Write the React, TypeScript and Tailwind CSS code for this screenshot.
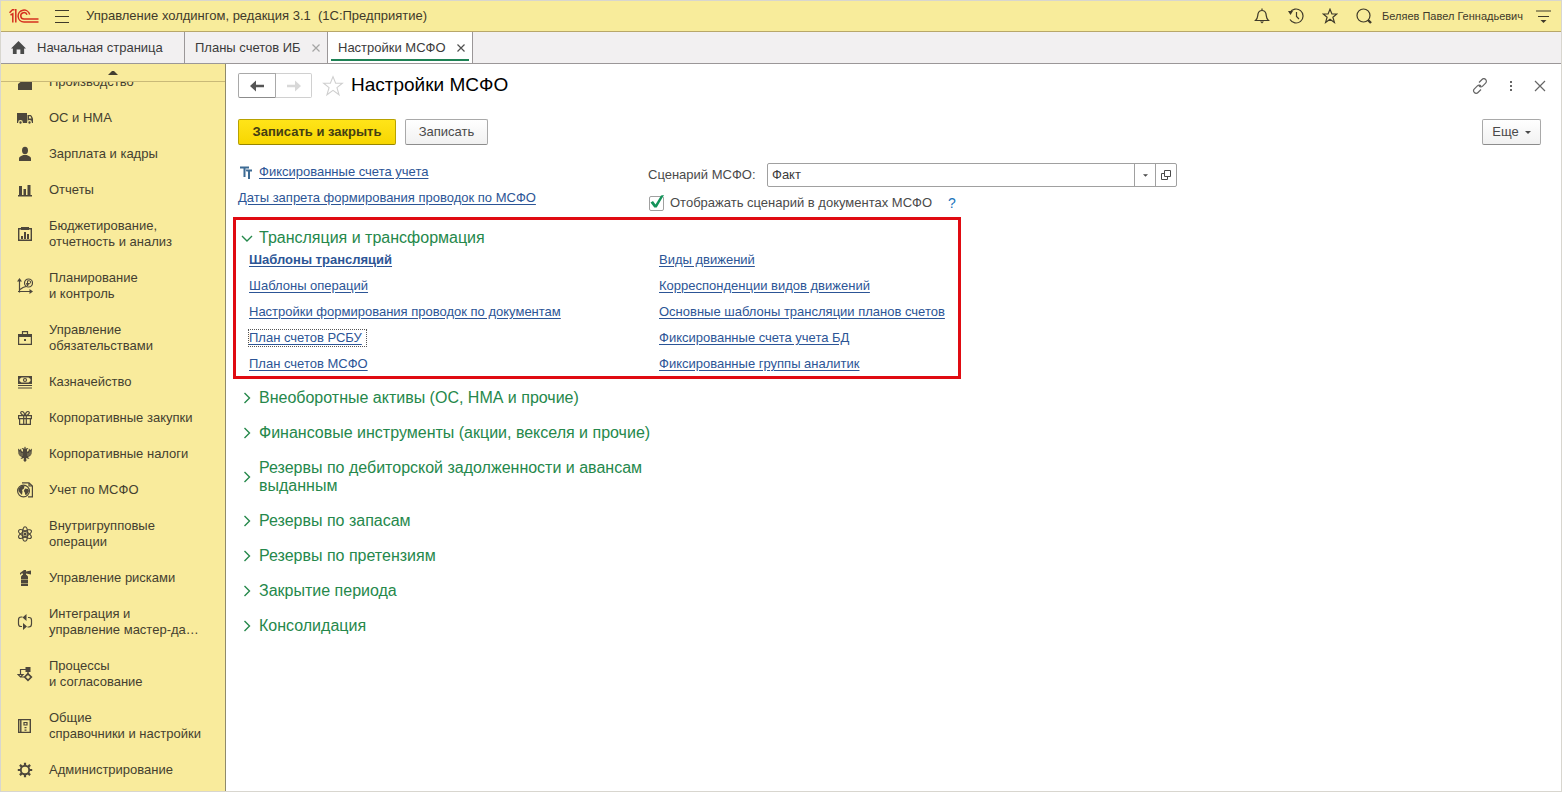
import type { ReactNode } from 'react';

type IconProps = { children: ReactNode; className?: string; box?: string };

function Icon({ children, className = 'size-4', box = '0 0 16 16' }: IconProps) {
  return (
    <svg viewBox={box} className={`shrink-0 ${className}`} fill="none" stroke="currentColor" strokeWidth="1.2" aria-hidden="true">
      {children}
    </svg>
  );
}

const solid = { fill: 'currentColor', stroke: 'none' };

const icons = {
  factory: <path {...solid} d="M1 16V10l5-4 8-2h1v12z" />,
  truck: (
    <>
      <path {...solid} d="M0 3h10v10H0z" />
      <path {...solid} d="M10.500 5H13c1 0 1.500.500 2 1.500l1 2V13h-5.500z" />
      <path d="M12 6.200h1.500l1 2.300H12z" fill="#f9eb9c" stroke="none" />
      <circle cx="3.500" cy="12.500" r="1.800" fill="currentColor" stroke="#f9eb9c" />
      <circle cx="12.500" cy="12.500" r="1.800" fill="currentColor" stroke="#f9eb9c" />
    </>
  ),
  person: (
    <>
      <ellipse {...solid} cx="8" cy="4.500" rx="3" ry="3.700" />
      <path {...solid} d="M2 15v-2.500C2 10.500 4 10 6.300 9h3.400C12 10 14 10.500 14 12.500V15z" />
    </>
  ),
  bars: <path {...solid} d="M1 13h14v1.500H1zM2 4h3v9H2zM6.500 7h2.500v6H6.500zM10.500 3h3v10h-3z" />,
  budget: (
    <>
      <path d="M1.700 2.700h12.600v11.600H1.700z" strokeWidth="1.400" />
      <path {...solid} d="M4 1h8v3H4zM4 10h2v3H4zM7 6h2v7H7zM10 8h2v5h-2z" />
    </>
  ),
  planning: (
    <>
      <path d="M2.500 2v12.500M1 13.500h13M3 11.500l3-2 3-1" />
      <path {...solid} d="M2.500 0 5 3.500H0zM16 13.500 12.500 11v5z" />
      <circle cx="11.500" cy="5" r="4" />
      <path d="M10.500 8V2.800h1.800a1.300 1.300 0 0 1 0 2.700H9.200M9.200 6.800h3" strokeWidth="1" />
    </>
  ),
  briefcase: (
    <>
      <path d="M1.600 5.500h12.800v8.900H1.600zM5.500 4V1.700h5V4" />
      <path {...solid} d="M1 4h14v3H1zM7 9h2v2H7z" />
    </>
  ),
  money: (
    <>
      <path {...solid} fillRule="evenodd" d="M1 2h14v8H1zM4.500 3.500 2.500 5v2l2 1.500h7l2-1.500V5l-2-1.500z" />
      <circle cx="8" cy="6" r="1.500" />
      <path d="M1 11.500h14M1 14h14" />
    </>
  ),
  gift: (
    <>
      <path d="M1.600 5.600h12.800v3H1.600zM2.600 8.600v5.800h10.800V8.600M6.700 5.600v8.800M9.300 5.600v8.800" />
      <path d="M7.500 5.500C3 5 3 1.500 5 1.500c1.500 0 2.500 2 3 4 .5-2 1.500-4 3-4 2 0 2 3.500-2.500 4" />
    </>
  ),
  eagle: (
    <>
      <path {...solid} d="M6 2l-1.500.5L6 3.500v2.200L4.500 5 4 2.500 2.800 4 1 2.500l.3 3 .2 2.500 1.300 2L5 11l-1.500 2 2-.5L7 12l-.5 2.500L8 16l1.500-1.500L9 12l1.500.5 2 .5L11 11l2.200-1 1.300-2 .2-2.500.3-3L13.200 4 12 2.500 11.500 5 10 5.700V3.500l1.500-1L10 2 8.700 3V1.500L8 .5l-.7 1V3z" />
      <path d="M3 5.500v4M5 7v3M11 7v3M13 5.500v4" stroke="#f9eb9c" strokeWidth=".4" />
    </>
  ),
  globe: (
    <>
      <path d="M5 .800h7L15.400 4v10.800H11M12 .800V4h3.400" />
      <circle cx="6.500" cy="9" r="5.900" />
      <path {...solid} d="M1.500 7c2-3.500 4-3.500 6-3l-.5 2.500-2 1.500.5 1.500L5 13l-2-2-1.500-2zM8 6.500l3 .5 1 2-2 3.500-1.700.500-.5-2.500-1-1.500z" />
    </>
  ),
  atom: (
    <>
      <ellipse cx="8" cy="8" rx="2.700" ry="7.200" strokeWidth="1.100" />
      <ellipse cx="8" cy="8" rx="2.700" ry="7.200" strokeWidth="1.100" transform="rotate(60 8 8)" />
      <ellipse cx="8" cy="8" rx="2.700" ry="7.200" strokeWidth="1.100" transform="rotate(120 8 8)" />
      <circle {...solid} cx="8" cy="8" r="1.600" />
    </>
  ),
  extinguisher: (
    <path {...solid} d="M4 7c0-1 1-2 2-2.300V3.500H4.500L3 5V3l2-1.500L7 0h2v1.500l5-1v4l-5-1v1.200C10 5 11 6 11 7v2H4zM4 9.500h7V13H4zM4 13.500h7V16H4z" />
  ),
  sync: (
    <>
      <path d="M5.500 3H4.200C2 3 1.500 4.500 1.500 6v4c0 1.500.5 2.500 2.500 2.500h1M11 3.500h1c2 0 2.500 1 2.500 2.500v4c0 2-1 3-2.700 3H10.500" />
      <path {...solid} d="M5.500 3.500 9.500 0v7zM10 12.500 6 9v7z" />
    </>
  ),
  process: (
    <>
      <path {...solid} d="M8.500 1h5v5h-5z" />
      <path d="M9 3.500H3.500V8M1 8.500h5L3.500 11zM11 6v2M3.500 11H7" />
      <path d="M11 7.800 14.300 11 11 14.300 7.700 11z" strokeWidth="1.700" />
    </>
  ),
  book: (
    <>
      <path d="M1.700 1.600h11.600v12.800H1.700zM3.800 2v12" strokeWidth="1.400" />
      <path d="M7 4.500h3v2.500H7z" />
      <path {...solid} d="M7.500 9h2v1.300h-2zM7.500 11.500h2v1.300h-2z" />
    </>
  ),
  gear: (
    <>
      <circle cx="8" cy="8" r="4.200" strokeWidth="1.900" />
      <path strokeWidth="2.200" d="M8 .800v2.700M8 12.500v2.700M.800 8h2.700M12.500 8h2.700M2.900 2.900l2 2M11.100 11.100l2 2M13.100 2.900l-2 2M4.900 11.100l-2 2" />
    </>
  ),
};

const menu: { icon: keyof typeof icons; lines: string[] }[] = [
  { icon: 'factory', lines: ['Производство'] },
  { icon: 'truck', lines: ['ОС и НМА'] },
  { icon: 'person', lines: ['Зарплата и кадры'] },
  { icon: 'bars', lines: ['Отчеты'] },
  { icon: 'budget', lines: ['Бюджетирование,', 'отчетность и анализ'] },
  { icon: 'planning', lines: ['Планирование', 'и контроль'] },
  { icon: 'briefcase', lines: ['Управление', 'обязательствами'] },
  { icon: 'money', lines: ['Казначейство'] },
  { icon: 'gift', lines: ['Корпоративные закупки'] },
  { icon: 'eagle', lines: ['Корпоративные налоги'] },
  { icon: 'globe', lines: ['Учет по МСФО'] },
  { icon: 'atom', lines: ['Внутригрупповые', 'операции'] },
  { icon: 'extinguisher', lines: ['Управление рисками'] },
  { icon: 'sync', lines: ['Интеграция и', 'управление мастер-да…'] },
  { icon: 'process', lines: ['Процессы', 'и согласование'] },
  { icon: 'book', lines: ['Общие', 'справочники и настройки'] },
  { icon: 'gear', lines: ['Администрирование'] },
];

const leftLinks = [
  'Шаблоны трансляций',
  'Шаблоны операций',
  'Настройки формирования проводок по документам',
  'План счетов РСБУ',
  'План счетов МСФО',
];

const rightLinks = [
  'Виды движений',
  'Корреспонденции видов движений',
  'Основные шаблоны трансляции планов счетов',
  'Фиксированные счета учета БД',
  'Фиксированные группы аналитик',
];

const groups = [
  'Внеоборотные активы (ОС, НМА и прочие)',
  'Финансовые инструменты (акции, векселя и прочие)',
  'Резервы по дебиторской задолженности и авансам выданным',
  'Резервы по запасам',
  'Резервы по претензиям',
  'Закрытие периода',
  'Консолидация',
];

const starPath = 'M10 1.500l2.400 6h6.100l-4.900 4 1.900 6.500-5.500-4-5.500 4 1.900-6.500-4.900-4h6.100z';

function Header() {
  return (
    <header className="flex h-[31px] items-center border-b border-[#b8a76a] bg-[#f8ec9b] pr-2.5 pl-2 text-[#3f3a2a]">
      <svg viewBox="0 0 30 16" className="h-4 w-[30px]" fill="none" stroke="#d5301f" strokeWidth="1.500" role="img" aria-label="1С">
        <path d="M.500 4.800 3.500 1.700H5M3.800 14.500V5.800L1.500 7M6.800 14.500V1.700H5.500" />
        <path d="M20.700 6.500A5.900 5.900 0 1 0 15 13.900h14.500" />
        <path d="M18 6.800A3.200 3.200 0 1 0 15 11h14.500" />
      </svg>
      <button type="button" aria-label="Главное меню" className="ml-[15px]">
        <Icon className="size-4"><path d="M1 2.500h14M1 8.500h14M1 14.500h14" /></Icon>
      </button>
      <span className="ml-4 whitespace-pre">Управление холдингом, редакция 3.1  (1С:Предприятие)</span>
      <div className="ml-auto flex items-center gap-[18px]">
        <button type="button" aria-label="Уведомления">
          <Icon><path d="M1.500 12.500C4 10.500 3.500 8 4 6c.4-2 1.500-3.500 4-3.500S11.600 4 12 6c.5 2 0 4.500 2.500 6.500zM8 2.500V.5" /><path {...solid} d="M6 13.500h4L8 15.500z" /></Icon>
        </button>
        <button type="button" aria-label="История">
          <Icon><path d="M2 4.500A7 7 0 1 1 2 11.500M8.500 4v4.500l2.500 2.500" /><path {...solid} d="M0 3l5 0-2.500 4z" /></Icon>
        </button>
        <button type="button" aria-label="Избранное">
          <Icon box="0 0 20 20"><path d={starPath} strokeWidth="1.500" /></Icon>
        </button>
        <button type="button" aria-label="Поиск">
          <Icon><circle cx="7.500" cy="7.500" r="6.500" /><path d="m12 12 3 3" strokeWidth="2.400" /></Icon>
        </button>
      </div>
      <span className="ml-2.5 text-[11px]">Беляев Павел Геннадьевич</span>
      <button type="button" aria-label="Настройки окна" className="ml-3">
        <Icon><path d="M1 3h15M3 8.500h11" /><path {...solid} d="M5.500 12h6l-3 3z" /></Icon>
      </button>
    </header>
  );
}

function Tabs() {
  return (
    <nav className="flex h-8 border-b border-[#9b9798] bg-[#f2f0f1] text-[#3b3b3b]">
      <button type="button" className="flex w-[184px] items-center gap-[11px] border-r border-[#9b9798] pl-2.5">
        <Icon className="size-[15px] text-[#4a4a4a]"><path {...solid} d="M8 1 16 9h-2v6h-4v-5H6v5H2V9H0z" /></Icon>
        Начальная страница
      </button>
      <div className="flex w-[143px] items-center justify-between border-r border-[#9b9798] pr-[7px] pl-2.5">
        <button type="button">Планы счетов ИБ</button>
        <button type="button" aria-label="Закрыть вкладку Планы счетов ИБ" className="text-[#a5a5a5]">
          <Icon className="size-2" box="0 0 8 8"><path d="m.5.500 7 7m0-7-7 7" /></Icon>
        </button>
      </div>
      <div className="flex w-[145px] border-r border-[#9b9798] bg-white px-[3px] pt-1 pb-0.5">
        <div className="flex grow items-center justify-between border-b-2 border-[#1f8255] pr-1 pl-[7px]">
          <button type="button">Настройки МСФО</button>
          <button type="button" aria-label="Закрыть вкладку Настройки МСФО" className="text-[#505050]">
            <Icon className="size-2" box="0 0 8 8"><path d="m.5.500 7 7m0-7-7 7" /></Icon>
          </button>
        </div>
      </div>
    </nav>
  );
}

function Sidebar() {
  return (
    <aside className="flex w-[225px] shrink-0 flex-col border-r border-[#8f8a6c] bg-[#f9eb9c] text-[#443f30]">
      <button type="button" aria-label="Прокрутить вверх" className="flex h-[18px] shrink-0 items-center justify-center border-b border-[#c9b978]">
        <Icon className="h-1 w-2.5" box="0 0 10 4"><path {...solid} d="M0 4 4 0h2l4 4z" /></Icon>
      </button>
      <div className="overflow-hidden">
        <ul className="-mt-[18px]">
          {menu.map((item) => (
            <li key={item.icon}>
              <a href="#" className="flex items-center gap-4 py-2.5 pl-4 leading-4">
                <Icon className="size-4 text-[#4d473b]">{icons[item.icon]}</Icon>
                <span>
                  {item.lines.map((line) => (
                    <span key={line} className="block whitespace-nowrap">{line}</span>
                  ))}
                </span>
              </a>
            </li>
          ))}
        </ul>
      </div>
    </aside>
  );
}

const linkClass = 'text-[#2c5596] underline underline-offset-2';
const buttonClass = 'flex h-[26px] items-center justify-center rounded-xs border border-[#a9a9a9] border-b-[#8c8c8c] bg-linear-to-b from-white to-[#f1f1f1] text-[#4a4a4a]';

function LinkColumn({ items }: { items: string[] }) {
  return (
    <ul className="flex flex-col gap-2.5 leading-4">
      {items.map((text) => (
        <li key={text} className="flex">
          <a
            href="#"
            className={`${linkClass} ${text === 'Шаблоны трансляций' ? 'font-bold' : ''} ${text === 'План счетов РСБУ' ? 'pr-1 outline-1 outline-dotted outline-[#555]' : ''}`}
          >
            {text}
          </a>
        </li>
      ))}
    </ul>
  );
}

function Settings() {
  return (
    <main className="min-w-0 grow bg-white pt-[9px] text-[#4a4a4a]">
      <div className="flex h-[25px] items-center pr-3 pl-3">
        <button type="button" aria-label="Назад" className="flex h-[25px] w-[38px] items-center justify-center rounded-l-xs border border-[#a9a9a9] border-b-[#8c8c8c] text-[#555]">
          <Icon className="h-3 w-3.5" box="0 0 14 12"><path {...solid} d="M0 6 6 .5V4.800h8v2.400H6v4.300z" /></Icon>
        </button>
        <button type="button" aria-label="Вперед" disabled className="flex h-[25px] w-9 items-center justify-center rounded-r-xs border border-l-0 border-[#d0d0d0] text-[#d8d8d8]">
          <Icon className="h-3 w-3.5" box="0 0 14 12"><path {...solid} d="M14 6 8 .5V4.800H0v2.400h8v4.300z" /></Icon>
        </button>
        <button type="button" aria-label="Добавить в избранное" className="ml-2.5 text-[#cfcfcf]">
          <Icon className="size-[22px]" box="0 0 20 20"><path d={starPath} strokeWidth="1" /></Icon>
        </button>
        <h1 className="ml-[7px] pb-0.5 text-[19px] leading-6 text-black">Настройки МСФО</h1>
        <div className="ml-auto flex items-center gap-4 pr-[3px] text-[#666]">
          <button type="button" aria-label="Получить ссылку">
            <Icon className="size-4"><path d="M7 4.500l3-3c1.200-1.200 2.700-.9 3.600 0s1.200 2.400 0 3.600l-3 3C9.400 9.300 8 9 7 8M9 11.500l-3 3c-1.200 1.200-2.700.9-3.600 0s-1.200-2.400 0-3.600l3-3C6.600 6.700 8 7 9 8" /></Icon>
          </button>
          <button type="button" aria-label="Меню формы">
            <Icon className="size-3.5" box="0 0 14 14"><path {...solid} d="M6 2h2v2H6zM6 6h2v2H6zM6 10h2v2H6z" /></Icon>
          </button>
          <button type="button" aria-label="Закрыть">
            <Icon className="size-3" box="0 0 12 12"><path d="m1 1 10 10m0-10L1 11" /></Icon>
          </button>
        </div>
      </div>

      <div className="mt-[21px] flex gap-[9px] pr-5 pl-3">
        <button type="button" className="flex h-[26px] w-[158px] items-center justify-center rounded-xs border border-[#b8a200] border-b-[#978500] bg-linear-to-b from-[#ffe418] to-[#f7d600] font-bold text-[#443e12]">
          Записать и закрыть
        </button>
        <button type="button" className={`${buttonClass} w-[83px]`}>Записать</button>
        <button type="button" className={`${buttonClass} ml-auto w-[59px] gap-1.5`}>
          Еще
          <Icon className="h-[3px] w-1.5" box="0 0 6 3"><path {...solid} d="M0 0h6L3 3z" /></Icon>
        </button>
      </div>

      <div className="mt-[18px] grid grid-cols-[410px_minmax(0,529px)] pl-3">
        <div className="flex flex-col items-start gap-2.5 pt-px leading-4">
          <div className="flex items-center gap-[5px]">
            <Icon className="size-4 text-[#3d6b94]">
              <path {...solid} d="M2 2.500h9v2H7.500V13h-2V4.500H2z" />
              <path {...solid} d="M7.500 5.500H14v2h-2V15h-2V7.500H8.500z" />
            </Icon>
            <a href="#" className={linkClass}>Фиксированные счета учета</a>
          </div>
          <a href="#" className={linkClass}>Даты запрета формирования проводок по МСФО</a>
        </div>
        <div className="flex flex-col gap-2">
          <div className="flex items-center">
            <label htmlFor="scenario" className="w-[119px] shrink-0">Сценарий МСФО:</label>
            <div className="flex h-6 min-w-0 grow rounded-xs border border-[#a0a0a0]">
              <input id="scenario" type="text" defaultValue="Факт" className="min-w-0 grow px-1 text-[#3b3b3b] outline-none" />
              <button type="button" aria-label="Выбрать сценарий" className="flex w-[21px] items-center justify-center border-l border-[#a0a0a0]">
                <Icon className="h-[3px] w-[5px]" box="0 0 6 3"><path {...solid} d="M0 0h6L3 3z" /></Icon>
              </button>
              <button type="button" aria-label="Открыть сценарий" className="flex w-[21px] items-center justify-center border-l border-[#a0a0a0]">
                <Icon className="size-2.5" box="0 0 10 10"><path d="M3.500.500h6v6h-6zM3 3.500H.5v6h6V7" strokeWidth="1" /></Icon>
              </button>
            </div>
          </div>
          <div className="flex h-4 items-center leading-4">
            <label className="flex items-center gap-1.5">
              <span className="grid size-4 place-items-center">
                <input type="checkbox" defaultChecked className="peer col-start-1 row-start-1 size-[15px] appearance-none rounded-xs border border-[#a0a0a0] bg-white" />
                <svg viewBox="0 0 16 16" className="pointer-events-none invisible col-start-1 row-start-1 size-4 peer-checked:visible" fill="#14935a" aria-hidden="true">
                  <path d="M2.500 7.500 5 6l2.500 3.500L13 .5 16 0 8.700 12.500H6.300z" />
                </svg>
              </span>
              Отображать сценарий в документах МСФО
            </label>
            <button type="button" aria-label="Справка" className="ml-4 text-sm leading-4 text-[#1a74bb]">?</button>
          </div>
        </div>
      </div>

      <section className="mt-1.5 ml-[7px] max-w-[728px] border-3 border-[#e00b12] pt-[9px] pb-1">
        <h2>
          <button type="button" aria-expanded="true" className="flex items-center gap-1.5 pl-[5px] text-base leading-[18px] text-[#25884b]">
            <Icon className="size-3" box="0 0 12 12"><path d="m1 4 5 5 5-5" strokeWidth="1.400" /></Icon>
            Трансляция и трансформация
          </button>
        </h2>
        <div className="mt-[5px] grid grid-cols-[410px_auto] pl-[13px]">
          <LinkColumn items={leftLinks} />
          <LinkColumn items={rightLinks} />
        </div>
      </section>

      <div className="mt-2.5 flex w-[440px] flex-col gap-[17px] pl-[15px]">
        {groups.map((title) => (
          <h2 key={title}>
            <button type="button" aria-expanded="false" className="flex items-center gap-1.5 text-left text-base leading-[18px] text-[#25884b]">
              <Icon className="size-3" box="0 0 12 12"><path d="m3.500 1 5 5-5 5" strokeWidth="1.400" /></Icon>
              {title}
            </button>
          </h2>
        ))}
      </div>
    </main>
  );
}

export default function App() {
  return (
    <div className="flex h-screen min-h-[792px] flex-col border border-[#d8d6cf] bg-white font-['Liberation_Sans',Arial,sans-serif] text-[13px]">
      <Header />
      <Tabs />
      <div className="flex min-h-0 grow">
        <Sidebar />
        <Settings />
      </div>
    </div>
  );
}
